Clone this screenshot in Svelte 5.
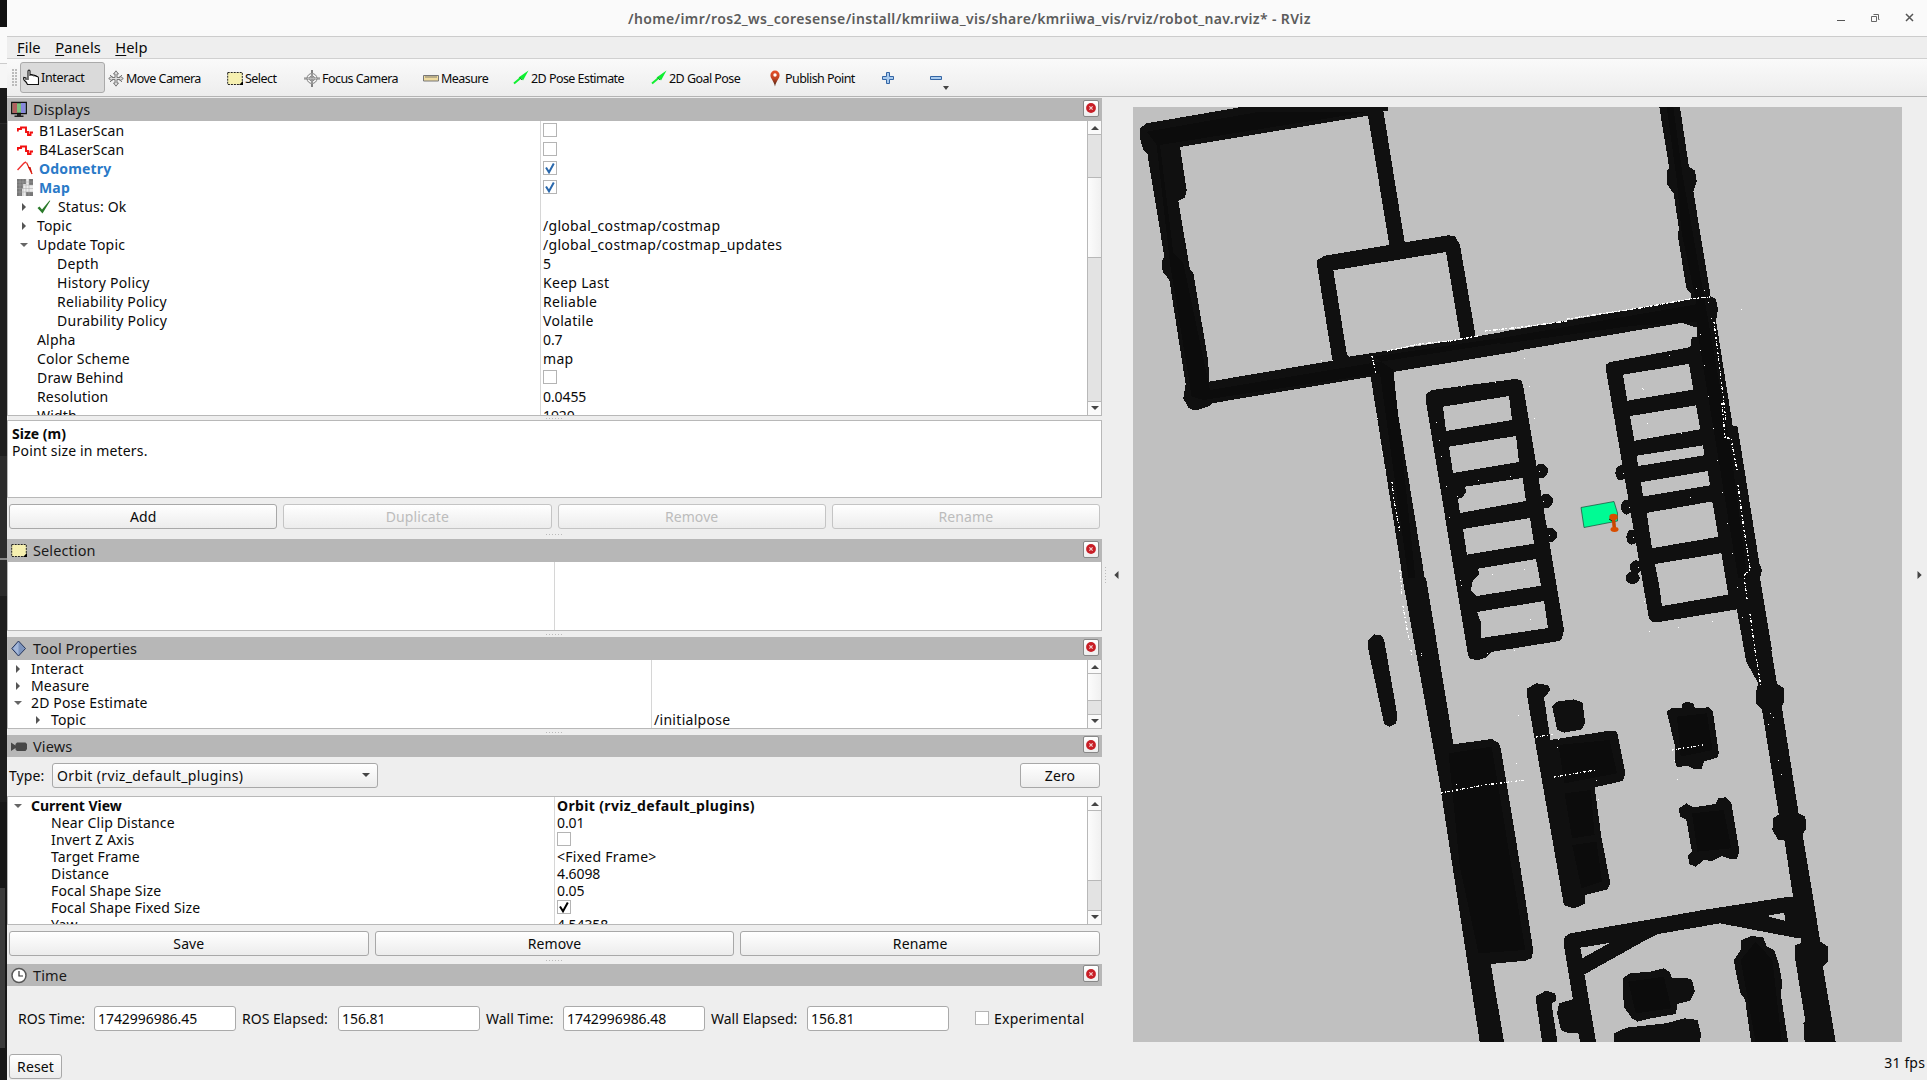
<script>
  const tools = [
    { icon: 'hand', label: 'Interact', w: 85, active: true },
    { icon: 'move', label: 'Move Camera', w: 118 },
    { icon: 'select', label: 'Select', w: 77 },
    { icon: 'focus', label: 'Focus Camera', w: 119 },
    { icon: 'ruler', label: 'Measure', w: 90 },
    { icon: 'arrow', label: '2D Pose Estimate', w: 138 },
    { icon: 'arrow', label: '2D Goal Pose', w: 116 },
    { icon: 'pin', label: 'Publish Point', w: 114 },
    { icon: 'plus', label: '', w: 48 },
    { icon: 'minus', label: '', w: 30 }
  ];

  const displays = [
    { kind: 'display', icon: 'laser', name: 'B1LaserScan', check: 'off' },
    { kind: 'display', icon: 'laser', name: 'B4LaserScan', check: 'off' },
    { kind: 'display', icon: 'odom', name: 'Odometry', check: 'blue', link: true },
    { kind: 'display', icon: 'map', name: 'Map', check: 'blue', link: true },
    { kind: 'prop', exp: 'closed', icon: 'ok', name: 'Status: Ok' },
    { kind: 'prop', exp: 'closed', name: 'Topic', value: '/global_costmap/costmap' },
    { kind: 'prop', exp: 'open', name: 'Update Topic', value: '/global_costmap/costmap_updates' },
    { kind: 'sub', name: 'Depth', value: '5' },
    { kind: 'sub', name: 'History Policy', value: 'Keep Last' },
    { kind: 'sub', name: 'Reliability Policy', value: 'Reliable' },
    { kind: 'sub', name: 'Durability Policy', value: 'Volatile' },
    { kind: 'prop', name: 'Alpha', value: '0.7' },
    { kind: 'prop', name: 'Color Scheme', value: 'map' },
    { kind: 'prop', name: 'Draw Behind', check: 'off' },
    { kind: 'prop', name: 'Resolution', value: '0.0455' },
    { kind: 'prop', name: 'Width', value: '1920' }
  ];

  const toolProps = [
    { kind: 'top', exp: 'closed', name: 'Interact' },
    { kind: 'top', exp: 'closed', name: 'Measure' },
    { kind: 'top', exp: 'open', name: '2D Pose Estimate' },
    { kind: 'child', exp: 'closed', name: 'Topic', value: '/initialpose' }
  ];

  const views = [
    { kind: 'top', exp: 'open', name: 'Current View', value: 'Orbit (rviz_default_plugins)', bold: true },
    { kind: 'child', name: 'Near Clip Distance', value: '0.01' },
    { kind: 'child', name: 'Invert Z Axis', check: 'off' },
    { kind: 'child', name: 'Target Frame', value: '<Fixed Frame>' },
    { kind: 'child', name: 'Distance', value: '4.6098' },
    { kind: 'child', name: 'Focal Shape Size', value: '0.05' },
    { kind: 'child', name: 'Focal Shape Fixed Size', check: 'black' },
    { kind: 'child', name: 'Yaw', value: '4.54358' }
  ];

  const times = [
    { label: 'ROS Time:', value: '1742996986.45', lw: 76 },
    { label: 'ROS Elapsed:', value: '156.81', lw: 102 },
    { label: 'Wall Time:', value: '1742996986.48', lw: 83 },
    { label: 'Wall Elapsed:', value: '156.81', lw: 102 }
  ];

  const isNumber = (v) => /^[\d.]+$/.test(v ?? '');

  // isolated laser hits, in map pixels
  const hits = [
    [1377,418],[1380,444],[1381,450],[1382,454],[1385,469],[1321,360],[1332,360],[1461,386],[1495,382],[1436,422],[1439,440],[1441,456],[1446,486],[1457,496],[1478,480],[1510,476],[1492,574],[1460,580],[1461,585],[1449,517],
    [1524,358],[1529,386],[1534,418],[1539,471],[1543,501],[1549,535],[1524,569],[1530,619],[1514,650],[1487,653],[1642,388],[1643,389],[1647,423],[1649,437],[1681,433],[1669,355],[1741,309],[1696,288],[1704,290],[1708,302],[1711,318],[1700,334],[1700,350],[1704,365],[1708,396],[1713,428],[1717,460],[1722,492],[1727,523],[1732,553],[1737,587],[1742,617],
    [1623,473],[1629,507],[1633,537],[1638,567],[1644,601],[1649,631],[1678,627],[1712,621],[1690,497],[1518,715],[1516,763],[1456,784],[1598,799],[1596,780],[1557,747],[1558,739],[1674,760],[1677,779],[1778,760],[1781,774],[1770,713],[1773,717],[1768,724],[1421,653],[1421,655]
  ];
</script>

{#snippet icon(name)}
  {#if name === 'hand'}
    <svg class="ic" viewBox="0 0 16 17"><path d="M5 11V2.3Q5 1 6 1T7 2.3V7 5.500h2V7 6h2v1.500-1h2v1h1.500q1 .5 1 2V15.500H4.500Q3.500 13 1.500 11.500Q.2 10.500.8 8.500L3 9V11" fill="#fff" stroke="#111" stroke-width="1.100"/></svg>
  {:else if name === 'move'}
    <svg class="ic" viewBox="0 0 16 17"><path d="M8 .8 10.500 4H9v3.500h3V6l3.300 2.500L12 11V9.500H9V13h1.500L8 16.200 5.500 13H7V9.500H4V11L.7 8.500 4 6v1.500h3V4H5.500zM2 5l3 3M14 5l-3 3M2 12l3-3M14 12l-3-3" fill="#ddd" stroke="#777"/></svg>
  {:else if name === 'select'}
    <svg class="ic" viewBox="0 0 16 17"><path d="M.7 2.500h14.600v12H.7z" fill="#f6f0b0" stroke="#222" stroke-dasharray="2 1"/><path d="M12 15h4v-4z" fill="#000"/></svg>
  {:else if name === 'focus'}
    <svg class="ic" viewBox="0 0 16 17"><g fill="none" stroke="#808080"><circle cx="8" cy="8.500" r="5"/><circle cx="8" cy="8.500" r="2.500"/><path d="M7.500 0v17M8.500 0v17M0 8h16M0 9h16"/></g><path d="M8 3v11M3 8.500h10" stroke="#ccc" stroke-width=".6"/></svg>
  {:else if name === 'ruler'}
    <svg class="ic" viewBox="0 0 16 17"><path d="M.5 5.500h15v5.500H.5z" fill="#f0dca0" stroke="#777"/><path d="M3 6v2M5 6v2M7 6v2M9 6v2M11 6v2M13 6v2" stroke="#666" stroke-width=".8"/></svg>
  {:else if name === 'arrow'}
    <svg class="ic" viewBox="0 0 16 17"><path d="M1 13.500 7.500 8" stroke="#10f030" stroke-width="2"/><path d="M5.500 7.500 15.500 .5 10 10.500 8.500 8.500z" fill="#0cf030"/><path d="M7 7.500 9 10" stroke="#157a20"/></svg>
  {:else if name === 'pin'}
    <svg class="pin" viewBox="0 0 10 17"><defs><linearGradient id="pin" x2="0" y2="1"><stop offset="0" stop-color="#e8502a"/><stop offset=".5" stop-color="#c04424"/><stop offset="1" stop-color="#402010"/></linearGradient></defs><path d="M5 .5a4.600 4.600 0 0 1 4.600 4.700C9.600 8.500 6 11 5 16.500 4 11 .4 8.500.4 5.200A4.600 4.600 0 0 1 5 .5" fill="url(#pin)"/><circle cx="5" cy="5" r="1.700" fill="#fff"/></svg>
  {:else if name === 'plus'}
    <svg class="ic" viewBox="0 0 16 17"><path d="M6.500 2.500h3v4h4v3h-4v4h-3v-4h-4v-3h4z" fill="#a9cbee" stroke="#3465a4"/></svg>
  {:else if name === 'minus'}
    <svg class="ic" viewBox="0 0 16 17"><path d="M2.500 6.500h11v3h-11z" fill="#a9cbee" stroke="#3465a4"/></svg>
  {:else if name === 'displays'}
    <svg class="ic" viewBox="0 0 16 17"><path d="M.7 1.500h14.600v11H.7z" fill="#7bbf7b" stroke="#111" stroke-width="1.300"/><path d="M1.500 2H6v10H1.500z" fill="#b06060"/><path d="M10 2h4.500v10H10z" fill="#8888dd"/><path d="M6 13h4v1.500h2.500V16h-9v-1.500H6z" fill="#222"/></svg>
  {:else if name === 'diamond'}
    <svg class="ic" viewBox="0 0 16 17"><path d="M7.500 1 14.500 8.500 7.500 16 .8 8.500z" fill="#7d94bd" stroke="#26365c"/><path d="M7.500 2v13L2 8.500z" fill="#a3b7da"/></svg>
  {:else if name === 'camera'}
    <svg class="ic" viewBox="0 0 16 17"><path d="M0 4.500 4.500 7.500V6L6 4.500h8.500L16 6v5l-1.500 2H6L4.500 11.500V10L0 13z" fill="#474747"/></svg>
  {:else if name === 'clock'}
    <svg class="ic" viewBox="0 0 16 17"><circle cx="8" cy="8.500" r="7" fill="#fff" stroke="#555" stroke-width="1.500"/><path d="M8 4v5h4" fill="none" stroke="#333" stroke-width="1.200"/></svg>
  {:else if name === 'laser'}
    <svg class="ic" viewBox="0 0 16 17"><path d="M.8 9.500V7H4V5.500h5v4.500h2v3h2.500v-2.500H16" fill="none" stroke="#f21010" stroke-width="1.900"/></svg>
  {:else if name === 'odom'}
    <svg class="ic" viewBox="0 0 16 17"><path d="M.5 10 7 3l2-1" fill="none" stroke="#f03030" stroke-width="1.500"/><path d="M9.500 2.500 15 14" stroke="#e02010" stroke-width="1.200"/><path d="m11 7 4.500 7-2-7z" fill="#d01008"/></svg>
  {:else if name === 'map'}
    <svg class="ic" viewBox="0 0 16 17"><path d="M0 0h16v17H0z" fill="#ececec"/><path d="M0 0h9v5H6v4.500H5V17H0zM12 0h4v6h-4zM9 13h7v4H9z" fill="#777"/><path d="M3 0v17M6 0v17M9 0v17M12 0v17M0 3h16M0 6h16M0 9.500h16M0 13h16" stroke="#a5a5a5" stroke-width=".5"/></svg>
  {:else if name === 'ok'}
    <svg class="okic" viewBox="0 0 14 14"><path d="M.5 8 2.500 6.500 5 9.500 12.500.5l.8.3L5.500 13.500z" fill="#2a7a2a"/></svg>
  {/if}
{/snippet}

{#snippet checkbox(state)}
  <span class="check">
    {#if state !== 'off'}
      <svg viewBox="0 0 12 12" class={state}><path d="M2 5.500 5 10.300 9.800 1.500" fill="none" stroke="currentColor" stroke-width="2"/></svg>
    {/if}
  </span>
{/snippet}

{#snippet header(name, title)}
  <header class={name}>
    {@render icon(name)}<span>{title}</span>
    <i class="close"><svg viewBox="0 0 10 10"><circle cx="5" cy="5" r="4.900" fill="#c81e26"/><path d="m3.400 3.400 3.200 3.200m0-3.200L3.400 6.600" stroke="#f4d0d0" stroke-width="1.200"/></svg></i>
  </header>
{/snippet}

{#snippet scroll()}
  <div class="scroll">
    <span class="sb"><b class="up"></b></span>
    <span class="trough"><span class="thumb"></span></span>
    <span class="sb down"><b class="dn"></b></span>
  </div>
{/snippet}

{#snippet tree(rows, cls)}
  <div class="tree {cls}">
    <div class="rows">
      {#each rows as r}
        <div class="row" class:bold={r.bold}>
          <div class="name {r.kind}">
            {#if r.kind !== 'display'}<span class="exp">{#if r.exp}<b class={r.exp}></b>{/if}</span>{/if}
            {#if r.icon}{@render icon(r.icon)}{/if}
            <span class:link={r.link}>{r.name}</span>
          </div>
          <div class="val" class:num={isNumber(r.value)}>{#if r.check}{@render checkbox(r.check)}{:else}{r.value ?? ''}{/if}</div>
        </div>
      {/each}
    </div>
    {#if cls !== 'selection'}{@render scroll()}{/if}
  </div>
{/snippet}

<div class="screen">
  <div class="behind"><i class="s1"></i><i class="s2"></i><i class="s3"></i><i class="s4"></i><i class="s5"></i><i class="s6"></i><i class="s7"></i><i class="s8"></i></div>
  <div class="window">
    <div class="title">
      <span></span>
      <strong>/home/imr/ros2_ws_coresense/install/kmriiwa_vis/share/kmriiwa_vis/rviz/robot_nav.rviz* - RViz</strong>
      <svg viewBox="0 0 80 12"><path d="M1 8.500h8" stroke="#555"/><path d="M37.500 2.500h5v5h1M35.500 4.500h5v5h-5z" fill="none" stroke="#666"/><path d="m70 2 7 7m0-7-7 7" stroke="#555" stroke-width="1.500"/></svg>
    </div>
    <nav><span><u>F</u>ile</span><span><u>P</u>anels</span><span><u>H</u>elp</span></nav>
    <div class="toolbar">
      <i class="grip"></i>
      {#each tools as t}
        <div class="tool {t.icon}" class:active={t.active} style:width="{t.w}px">{@render icon(t.icon)}<span>{t.label}</span></div>
      {/each}
    </div>

    <div class="main">
      <div class="dock">
        <section>
          {@render header('displays', 'Displays')}
          {@render tree(displays, 'displays')}
          <div class="split"><i></i></div>
          <div class="desc"><b>Size (m)</b><span>Point size in meters.</span></div>
          <div class="buttons">
            <button>Add</button><button disabled>Duplicate</button><button disabled>Remove</button><button disabled>Rename</button>
          </div>
        </section>
        <div class="gap10"><i></i></div>
        <section>
          {@render header('select', 'Selection')}
          {@render tree([], 'selection')}
        </section>
        <div class="gap6"><i></i></div>
        <section>
          {@render header('diamond', 'Tool Properties')}
          {@render tree(toolProps, 'props')}
        </section>
        <div class="gap6"><i></i></div>
        <section>
          {@render header('camera', 'Views')}
          <div class="type"><span>Type:</span><div class="combo">Orbit (rviz_default_plugins)<b class="dn"></b></div><button>Zero</button></div>
          {@render tree(views, 'views')}
          <div class="buttons"><button>Save</button><button>Remove</button><button>Rename</button></div>
        </section>
        <div class="gap8"><i></i></div>
        <section>
          {@render header('clock', 'Time')}
          <div class="times">
            {#each times as t}
              <label style:width="{t.lw}px">{t.label}</label><div class="field">{t.value}</div>
            {/each}
            <div class="exper">{@render checkbox('off')}<span>Experimental</span></div>
          </div>
        </section>
      </div>

      <div class="handle"><i></i><svg viewBox="0 0 5 8"><path d="M4.500 0v8L.3 4z" fill="#444"/></svg></div>

      <svg class="map" viewBox="1133 107 769 935" shape-rendering="crispEdges">
        <g fill="#101010">
          <!-- north-west rooms -->
          <g transform="translate(1120 90) scale(.33333)">
            <path d="M60 115 80 100 370 50H805L803 62H790L854 457 985 436 1005 438 1020 465 1067 740 1200 717V783L814 847 920 1500H853L838 1400 752 860 275 940 270 948 225 962 205 953 190 925 197 883 148 570 128 545 125 515 133 500 82 190 70 180 60 145z"/>
            <path fill="#c0c0c0" d="M180 171 744 77 808 465 615 497 592 510V530L638 812 267 875 265 815 220 550 210 540 175 333 195 322 200 300z"/>
            <path d="M615 497 808 465 850 470 850 510 640 545 690 810 638 815 592 530V510z"/>
            <path fill="#c0c0c0" d="M640 541 978 486 1022 748 687 800 680 790z"/>
            <path d="M80 125 420 65H750L120 165 160 490 190 520 270 900 750 820 1200 750V735L760 800 820 840 890 1500H870L780 850 250 930 215 920 150 520 110 165z" fill="#0c0c0c"/>
          </g>
          <!-- west shelf -->
          <path d="M1426 394 1432 390 1515 379 1521 380 1523 385 1564 630 1562 638 1559 641 1491 652 1487 657 1478 660 1470 659 1468 655 1426 402z"/>
          <path fill="#c0c0c0" d="M1443 406.700 1509 396 1512 420 1446 431zM1449 446.700 1516 436 1519 462 1453 473zM1465 486.700 1522.700 478 1526 501 1460 513 1458 499 1463 497 1466 492zM1463 529 1530 518 1534 543.600 1467 554.700zM1478.300 568.700 1536 559 1541 585.700 1476.700 596 1471 590 1473 580 1479 575zM1477 612 1544 601 1548 628 1481.500 638 1480.800 622z"/>
          <circle cx="1541" cy="471" r="7"/><circle cx="1546" cy="501" r="7"/><circle cx="1550" cy="535" r="7"/>
          <!-- east wall and shelf -->
          <g transform="translate(1500 90) scale(.33333 .35714)">
            <path d="M478 48H540L567 216 585 225 590 255 580 283 632 578 648 585 654 615 648 645 698 940 712 942 720 985 778 1325 786 1345 780 1365 816 1568H735L712 1454 475 1490 458 1490 447 1480 319 790V768L330 762 571 720 575 693 592 690 590 665 545 652 0 738V678L573 585 572 570 559 555 533 405 537 390 521 290 500 262 502 225 508 220z"/>
            <ellipse cx="363" cy="1072" rx="17" ry="21"/><ellipse cx="380" cy="1168" rx="17" ry="21"/><ellipse cx="396" cy="1252" rx="17" ry="21"/><ellipse cx="408" cy="1336" rx="18" ry="19"/><ellipse cx="398" cy="1366" rx="21" ry="17"/>
            <path fill="#c0c0c0" d="M369 797 567 767 580 839 382 870zM390 913 588 883 601 950 403 982zM410 1024 609 995 613 1023 414 1053zM423 1098 623 1067 630 1107 429 1138zM440 1184 637 1152 655 1251 456 1283zM465 1327 664 1297 685 1413 486 1445 478 1390z"/>
            <path d="M500 48H520L548 240 620 620 690 990 770 1568H750L600 720 590 650 400 660 0 712V695L590 600 545 400 530 250z" fill="#0c0c0c"/>
          </g>
          <!-- southern half -->
          <g transform="translate(1340 580) scale(.37439 .33333)">
            <path d="M167 -5H230L303 493 405 477 425 490 430 510 470 780 485 885 516 1110 512 1135 495 1142 403 1152 438 1386H373L367 1340 340 1145 265 600z"/>
            <path d="M1045 -5H1120L1167 310 1185 325 1187 365 1180 380 1225 700 1243 710 1245 745 1236 765 1283 1085 1303 1100V1145L1290 1160 1324 1386H1241L1238 1330 1243 1325 1214 1125 1215 1095 1231 1090V1073H1215L1015 1030 850 1062 825 1075 653 1183 684 1386H642L636 1358 610 1360 590 1350 580 1300 585 1270 622 1258 598 1095 600 1070 615 1060 830 1018 970 990 1200 950H1210L1187 780 1170 780 1155 750 1157 715 1172 703 1127 387 1112 370 1110 340 1117 310 1085 245 1060 88z"/>
            <path fill="#c0c0c0" d="M642 1103 720 1089 647 1135zM1140 1008 1186 998 1190 1023z"/>
            <path d="M75 180 90 163 112 167 118 180 153 405 150 430 133 440 118 433 75 205z"/>
            <path d="M500 325 525 310 555 315 563 330 545 352 562 480 720 452 740 455 762 580 755 603 680 622 698 770 722 910 715 928 655 945V970L625 986 598 975 500 350z"/>
            <path d="M567 380 580 365 625 358 648 368 655 430 645 448 600 458 580 450z"/>
            <path d="M873 395 885 385H912L915 370 930 365 945 372 948 385 985 382 996 395 1012 520 1008 532 972 545 965 568H945L935 560 920 558 900 562 895 545V500z"/>
            <path d="M905 685 925 670 945 682 1003 672 1010 655 1030 652 1045 668 1067 815 1060 838H1045L1020 828 995 843 972 840 950 860 932 852 930 825 940 815 925 718 908 710z"/>
            <path d="M522 1250 550 1232 575 1240 578 1260 565 1272 581 1386H540z"/>
            <path d="M755 1195 775 1180 830 1175 865 1165 880 1175 887 1195 925 1193 940 1200 948 1235 935 1262 900 1272 898 1302 830 1315 795 1325 780 1315 758 1280z"/>
            <path d="M733 1360 765 1343 870 1330 920 1315 955 1320 965 1365 960 1386H733z"/>
            <path d="M1052 1140 1070 1110 1072 1080 1100 1068 1130 1072 1140 1100 1160 1110 1172 1150 1182 1215 1177 1240 1197 1386H1098L1082 1258 1070 1240 1058 1180z"/>
            <path fill="#0c0c0c" d="M290 520 405 500 495 1110 370 1120 320 860zM583 495 720 480 740 580 600 610zM600 640 670 630 680 765 620 775zM620 795 685 785 700 905 645 925zM900 410 980 400 995 510 910 530zM940 700 1025 690 1045 805 955 815zM770 1205 865 1190 885 1285 790 1300zM1070 1140 1110 1085 1155 1140 1180 1386H1110z"/>
          </g>
        </g>
        <!-- laser returns along walls -->
        <g fill="none" stroke="#fff" stroke-width="1.300" stroke-dasharray="2 2 1 1 3 2 1 3">
          <path d="M1387 351 1420 344 1450 341 1478 336M1485 331 1522 327 1567 321M1567 319 1640 308 1690 299 1710 297" stroke-dasharray="3 1 2 2 5 1 1 1"/>
          <path d="M1372 356 1376 373M1392 482 1394 500 1397 517 1400 532M1400 570 1402 596M1403 606 1409 640M1411 650 1412 656M1714 322 1720 370 1726 422M1722 403 1725 437 1731 439 1737 470M1738 485 1744 530 1750 568M1750 569 1744 576 1747 599M1750 614 1755 650 1761 687M1441 793 1484 785 1526 780M1536 737 1555 734M1554 777 1596 770M1672 750 1703 745"/>
        </g>
        <g fill="#fff">{#each hits as [x, y]}<rect {x} {y} width="1.400" height="1.400"/>{/each}</g>
        <!-- robot base and arm -->
        <g shape-rendering="auto">
          <path d="M1581 507.500 1614 501.500 1617.500 513V521L1584 527.500z" fill="#00fb94" stroke="#144c38" stroke-width=".7"/>
          <path d="M1613.500 519 1614.500 530" stroke="#c84600" stroke-width="3.500" fill="none"/>
          <ellipse cx="1613.500" cy="517" rx="4.200" ry="3.200" fill="#d84d00"/><ellipse cx="1614.500" cy="529.500" rx="4" ry="2.400" fill="#d84d00"/><path d="M1609 519l3 2" stroke="#241000"/>
        </g>
      </svg>
      <div class="rhandle"><svg viewBox="0 0 5 8"><path d="M.5 0v8l4.200-4z" fill="#444"/></svg></div>
    </div>

    <footer><button>Reset</button><span>31 fps</span></footer>
  </div>
</div>

<style>
  :global(body) { margin: 0; background: #eee; }
  .screen { display: flex; width: 1927px; height: 1080px; overflow: hidden; font: 14px/17px "Noto Sans", "Open Sans", sans-serif; letter-spacing: -.05px; color: #0a0a0a; }
  .behind { width: 7px; display: flex; flex-direction: column; flex: none; }
  .behind i { display: block; flex: none; }
  .s1 { height: 27px; background: #111; }
  .s2 { height: 61px; background: linear-gradient(#fafafa 36px, #ccc 36px, #ccc 37px, #f6f6f6 37px); }
  .s3 { height: 35px; background: #191919; }
  .s4 { height: 333px; background: linear-gradient(#2a2a2a 1px, #1f1f1f 1px); }
  .s5 { height: 140px; background: linear-gradient(#2c2c2c 102px, #888 102px, #888 104px, #2c2c2c 104px); }
  .s6 { height: 206px; background: #1e1e1e; }
  .s7 { height: 86px; background: #171717; }
  .s8 { height: 192px; background: linear-gradient(#3b3b3b 160px, #171717 160px); border-right: 2px solid #171717; width: 5px; }
  .window { flex: 1; display: flex; flex-direction: column; background: #eee; min-width: 0; }
  .title { height: 36px; background: #fafafa; border-bottom: 1px solid #ccc; display: grid; grid-template-columns: 621px 1fr 80px; align-items: center; padding-right: 11px; flex: none; }
  .title strong { color: #5c5c5c; font-size: 14px; font-weight: 600; letter-spacing: .36px; padding-top: 1px; white-space: nowrap; }
  .title svg { width: 80px; height: 12px; }
  nav { height: 21px; border-bottom: 1px solid #d0d0d0; display: flex; gap: 14.500px; padding-left: 10px; font-size: 14.700px; letter-spacing: .05px; line-height: 21px; flex: none; }
  u { text-underline-offset: 2px; }
  .toolbar { height: 37px; border-bottom: 1px solid #b4b4b4; background: linear-gradient(#fafafa, #ededed); display: flex; align-items: center; padding-left: 5px; flex: none; margin-bottom: 1px; }
  .grip { width: 5px; height: 18px; margin-right: 3px; background: radial-gradient(circle at 1px 1px, #bbb .8px, transparent 1px) 0 0 / 3px 3px; }
  .tool { display: flex; align-items: center; gap: 2px; height: 31px; box-sizing: border-box; padding: 2px 0 0 4px; font-size: 12.500px; letter-spacing: -.55px; white-space: nowrap; }
  .tool.active { background: #dadada; border: 1px solid #aaa; border-radius: 3px; padding: 0 0 0 2px; letter-spacing: -.3px; }
  .tool.move { padding-left: 3px; }
  .tool.pin { padding-left: 7px; gap: 5px; }
  .tool.plus, .tool.minus { padding-left: 3px; }
  .tool.minus { position: relative; }
  .tool.minus::after { content: ""; position: absolute; left: 18px; bottom: 3px; border: 3.500px solid transparent; border-top: 4px solid #444; border-bottom: 0; }
  .ic { width: 16px; height: 17px; flex: none; }
  svg.pin { width: 10px; height: 17px; }
  .okic { width: 14px; height: 14px; margin-right: 7px; }
  .main { display: flex; height: 944px; flex: none; }
  .dock { width: 1095px; flex: none; display: flex; flex-direction: column; }
  header { height: 23px; background: #b7b7b7; display: flex; align-items: center; gap: 6px; padding: 0 3px 0 4px; color: #1a1a1a; }
  header.camera, header.clock { height: 22px; }
  header > span { flex: 1; font-size: 14.500px; letter-spacing: .1px; }
  .close { width: 14px; height: 15px; border: 1px solid #888; border-radius: 2px; background: linear-gradient(#fff, #eee); display: grid; place-items: center; margin-bottom: 3px; }
  .close svg { width: 10px; height: 10px; }
  .tree { box-sizing: border-box; display: flex; background: #fff; border: 1px solid #b8b8b8; border-top: 0; overflow: hidden; letter-spacing: .16px; }
  .tree.displays { height: 295px; --rh: 19px; --col: 532px; }
  .tree.selection { height: 69px; --col: 546px; }
  .tree.props { height: 69px; --rh: 17px; --col: 643px; }
  .tree.views { height: 129px; --rh: 17px; --col: 546px; border-top: 1px solid #b8b8b8; }
  .rows { flex: 1; background: linear-gradient(90deg, transparent var(--col), #d6d6d6 var(--col), #d6d6d6 calc(var(--col) + 1px), transparent calc(var(--col) + 1px)); }
  .row { height: var(--rh); line-height: var(--rh); display: grid; grid-template-columns: calc(var(--col) + 3px) 1fr; white-space: nowrap; }
  .name { display: flex; align-items: center; height: var(--rh); }
  .val { display: flex; align-items: center; height: var(--rh); letter-spacing: .3px; }
  .val.num { letter-spacing: -.1px; }
  .display { padding-left: 9px; }
  .display .ic, .display :global(svg) { margin-right: 6px; }
  .exp { width: 20px; height: 100%; display: grid; place-items: center start; }
  .prop { padding-left: 9px; }
  .prop .exp { padding-left: 5px; width: 15px; }
  .sub { padding-left: 29px; letter-spacing: .28px; }
  .top { padding-left: 8px; }
  .top .exp { width: 15px; }
  .child { padding-left: 28px; }
  .child .exp { width: 15px; }
  .closed { border: 4px solid transparent; border-left: 4px solid #555; border-right: 0; }
  .open { border: 4px solid transparent; border-top: 4px solid #666; border-bottom: 0; margin-left: -2px; }
  .link { color: #2a7ac8; font-weight: 700; }
  .bold { font-weight: 700; letter-spacing: 0; }
  .bold .val { letter-spacing: .35px; }
  .check { width: 12px; height: 12px; border: 1px solid #b4b4b4; background: #fff; display: block; margin-bottom: 1px; flex: none; }
  .check svg { display: block; width: 12px; height: 12px; }
  .blue { color: #2a68ac; }
  .black { color: #000; }
  .scroll { width: 13px; border-left: 1px solid #b8b8b8; display: flex; flex-direction: column; flex: none; }
  .sb { height: 13px; flex: none; border-bottom: 1px solid #b8b8b8; display: grid; place-items: center; background: #fafafa; }
  .sb.down { border-bottom: 0; border-top: 1px solid #b8b8b8; }
  .up, .dn { border: 4px solid transparent; border-bottom: 4px solid #444; border-top: 0; }
  .dn { border: 4px solid transparent; border-top: 4px solid #444; border-bottom: 0; }
  .sb .dn { margin-bottom: 2px; }
  .trough { flex: 1; background: #e3e3e3; }
  .thumb { display: block; border: solid #b8b8b8; border-width: 1px 0; background: linear-gradient(90deg, #fcfcfc, #f0f0f0); }
  .displays .thumb { margin-top: 42px; height: 79px; }
  .props .thumb { height: 26px; border-top: 0; }
  .views .thumb { height: 69px; border-top: 0; }
  .split { height: 4px; display: grid; justify-content: center; align-items: center; }
  .split i, .gap10 i, .gap6 i, .gap8 i { display: block; width: 17px; height: 1px; background: repeating-linear-gradient(90deg, #bbb 0 1px, transparent 1px 3px); }
  .gap10, .gap6, .gap8 { display: grid; place-items: center; }
  .gap10 { height: 10px; }
  .gap6 { height: 6px; }
  .gap8 { height: 8px; }
  .desc { height: 76px; border: 1px solid #b8b8b8; background: #fff; display: flex; flex-direction: column; padding-left: 4px; letter-spacing: .15px; }
  .desc b { padding-top: 4px; letter-spacing: 0; }
  .buttons { display: flex; gap: 6px; padding: 6px 2px 0; }
  .buttons button { flex: 1; }
  button { box-sizing: border-box; height: 25px; border: 1px solid #a8a8a8; border-radius: 3px; background: linear-gradient(#fff, #ececec); font: inherit; letter-spacing: .1px; color: #0a0a0a; padding: 0; }
  button:disabled { color: #bcbcbc; border-color: #c4c4c4; }
  .type { display: flex; align-items: center; height: 39px; padding: 0 2px 3px; box-sizing: border-box; }
  .type span { width: 43px; letter-spacing: .1px; }
  .type button { width: 80px; margin-left: auto; }
  .combo { width: 326px; height: 25px; box-sizing: border-box; border: 1px solid #a8a8a8; border-radius: 3px; background: linear-gradient(#fff, #ececec); display: flex; align-items: center; justify-content: space-between; padding: 0 7px 0 4px; letter-spacing: .35px; }
  .times { display: flex; align-items: center; padding: 20px 0 0 11px; }
  .times label { flex: none; letter-spacing: 0; }
  .times label:not(:first-child) { padding-left: 6px; box-sizing: border-box; }
  .field { width: 142px; height: 25px; box-sizing: border-box; border: 1px solid #aaa; border-radius: 3px; background: #fff; line-height: 24px; padding-left: 3px; flex: none; }
  .exper { display: flex; align-items: center; gap: 5px; padding-left: 26px; letter-spacing: .25px; }
  .handle { width: 31px; display: flex; align-items: center; gap: 8px; padding: 10px 0 0 3px; box-sizing: border-box; }
  .handle i { width: 1px; height: 17px; background: repeating-linear-gradient(#bbb 0 1px, transparent 1px 3px); }
  .handle svg, .rhandle svg { width: 5px; height: 8px; }
  .map { width: 769px; height: 935px; background: #c0c0c0; margin-top: 9px; flex: none; display: block; }
  .rhandle { width: 25px; display: grid; place-items: center; padding-top: 9px; box-sizing: border-box; }
  .rhandle svg { margin-left: 9px; }
  footer { display: flex; justify-content: space-between; padding: 12px 2px 0; }
  footer button { width: 53px; }
  footer span { letter-spacing: .15px; }
</style>
